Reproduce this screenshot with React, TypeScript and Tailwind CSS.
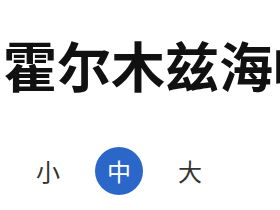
import React from "react";

const sizes = ["小", "中", "大"];

const App: React.FC = () => {
    const active = "中";
    return (
        <div className="w-[280px] h-[210px] overflow-hidden bg-white font-['Noto_Sans_CJK_SC',sans-serif]">
            <div className="pt-[38px] pl-[3px] whitespace-nowrap text-[54px] leading-none font-bold text-[#111]">
                霍尔木兹海峡
            </div>
            <div className="mt-[55px] flex flex-row gap-[23px] pl-[24px]">
                {sizes.map((s) => (
                    <button
                        key={s}
                        className={
                            s === active
                                ? "w-12 h-12 rounded-full bg-[#2b67c9] text-white text-[24px] leading-none flex items-center justify-center"
                                : "w-12 h-12 rounded-full text-[#333] text-[24px] leading-none flex items-center justify-center"
                        }
                    >
                        {s}
                    </button>
                ))}
            </div>
        </div>
    );
};

export default App;
